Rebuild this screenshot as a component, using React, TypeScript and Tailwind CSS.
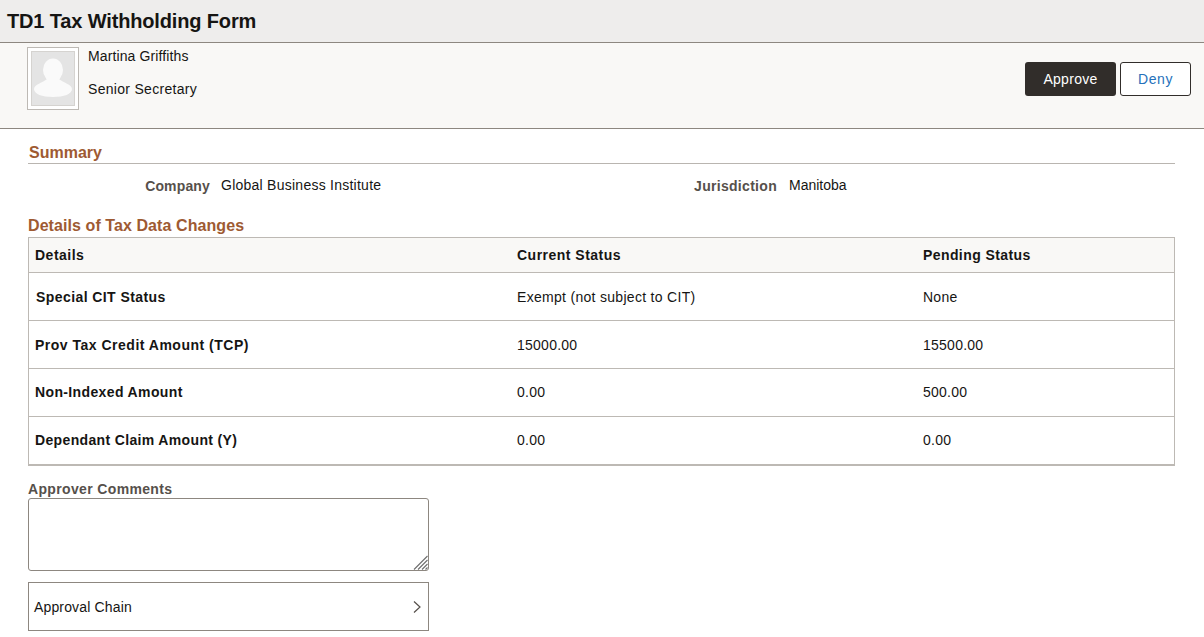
import React from "react";

const rows = [
  { label: "Special CIT Status", cur: "Exempt (not subject to CIT)", pen: "None", cls: "pl-[7px] tracking-[0.42px]", row: "pt-[2px]", curT: "tracking-[0.3px]" },
  { label: "Prov Tax Credit Amount (TCP)", cur: "15000.00", pen: "15500.00", cls: "pl-[6px] tracking-[0.5px]", row: "pt-[2px]", curT: "tracking-[0.25px]" },
  { label: "Non-Indexed Amount", cur: "0.00", pen: "500.00", cls: "pl-[6px] tracking-[0.37px]", row: "", curT: "tracking-[0.25px]" },
  { label: "Dependant Claim Amount (Y)", cur: "0.00", pen: "0.00", cls: "pl-[6px] tracking-[0.35px]", row: "", curT: "tracking-[0.25px]" },
];

export default function App() {
  return (
    <div className="w-[1204px] h-[637px] overflow-hidden bg-white text-[14px] text-[#161513] font-['Liberation_Sans',Arial,sans-serif]">
      <header className="h-[43px] bg-[#eeedec] border-b border-[#8d8780] flex items-center pl-[7px]">
        <h1 className="text-[20px] font-bold text-[#161513] tracking-[-0.15px]">TD1 Tax Withholding Form</h1>
      </header>

      <section className="h-[86px] bg-[#f9f8f6] border-b border-[#8d8780] flex justify-between pl-[27px] pr-[13px]">
        <div className="flex gap-[9px] pt-[4px]">
          <div className="w-[52px] h-[63px] border border-[#bdb9b4] bg-white p-[3px]">
            <div className="w-full h-full bg-[#e4e4e4] border border-[#d5d3d0]">
              <svg viewBox="0 0 42 53" className="block w-[42px] h-[53px]">
                <ellipse cx="21" cy="18" rx="10" ry="11.5" fill="#fafafa" />
                <path d="M2 37 C2 32.5 11 30.5 15 27 L27 27 C31 30.5 40 32.5 40 37 C40 42 32 45 21 45 C10 45 2 42 2 37 Z" fill="#fafafa" />
              </svg>
            </div>
          </div>
          <div className="flex flex-col leading-[16px]">
            <span className="mt-[1px] tracking-[0.12px]">Martina Griffiths</span>
            <span className="mt-[17px] tracking-[0.3px]">Senior Secretary</span>
          </div>
        </div>
        <div className="flex gap-[4px] pt-[19px]">
          <button className="w-[91px] h-[34px] rounded-[3px] bg-[#312d2a] text-white tracking-[0.3px]">Approve</button>
          <button className="w-[71px] h-[34px] rounded-[3px] bg-white border border-[#312d2a] text-[#2571bb] tracking-[0.6px]">Deny</button>
        </div>
      </section>

      <main className="pl-[28px] pr-[29px]">
        <h2 className="mt-[15px] pl-px h-[19px] border-b border-[#b9b5b0] text-[16px] leading-[18px] font-bold text-[#9e5a32] box-content">Summary</h2>
        <div className="grid grid-cols-[182px_291px_276px_1fr] items-start mt-[12px] h-[18px] leading-[18px]">
          <span className="pt-[1px] text-right font-bold text-[#56504b] tracking-[0.15px]">Company</span>
          <span className="pl-[11px] tracking-[0.25px]">Global Business Institute</span>
          <span className="pt-[1px] text-right font-bold text-[#56504b] tracking-[0.3px]">Jurisdiction</span>
          <span className="pl-[12px]">Manitoba</span>
        </div>

        <h2 className="mt-[23px] h-[20px] text-[16px] leading-[18px] font-bold text-[#9e5a32] tracking-[0.08px]">Details of Tax Data Changes</h2>
        <div className="border border-[#bdb9b4]">
          <div className="grid grid-cols-[488px_406px_1fr] h-[35px] items-center bg-[#f9f8f6] border-b border-[#bdb9b4] font-bold">
            <span className="pl-[6px] tracking-[0.5px]">Details</span>
            <span className="tracking-[0.49px]">Current Status</span>
            <span className="tracking-[0.41px]">Pending Status</span>
          </div>
          {rows.map((r) => (
            <div key={r.label} className={`grid grid-cols-[488px_406px_1fr] h-[48px] items-center border-b border-[#bdb9b4] ${r.row}`}>
              <span className={`${r.cls} font-bold`}>{r.label}</span>
              <span className={r.curT}>{r.cur}</span>
              <span className="tracking-[0.25px]">{r.pen}</span>
            </div>
          ))}
        </div>

        <label className="block mt-[15px] h-[16px] leading-[16px] font-bold text-[#56504b] tracking-[0.35px]">Approver Comments</label>
        <div className="relative mt-px w-[401px] h-[73px]">
          <textarea className="block w-full h-full border border-[#8d8780] rounded-[3px] bg-white outline-none resize-none" />
          <svg viewBox="0 0 15 15" className="absolute right-[1px] bottom-[1px] w-[15px] h-[15px]" stroke="#6f6f6f" strokeWidth="1.1" fill="none">
            <path d="M1 14.5 L14.5 1 M5 14.5 L14.5 5 M9 14.5 L14.5 9 M12.5 14.5 L14.5 12.5" />
          </svg>
        </div>
        <div className="mt-[11px] w-[401px] h-[49px] border border-[#8d8780] flex items-center justify-between pl-[5px] pr-[6px]">
          <span className="pt-[2px] tracking-[0.15px]">Approval Chain</span>
          <svg viewBox="0 0 10 14" className="w-[10px] h-[14px]" fill="none" stroke="#56504b" strokeWidth="1.2">
            <path d="M2 1.5 L8 7 L2 12.5" />
          </svg>
        </div>
      </main>
    </div>
  );
}
